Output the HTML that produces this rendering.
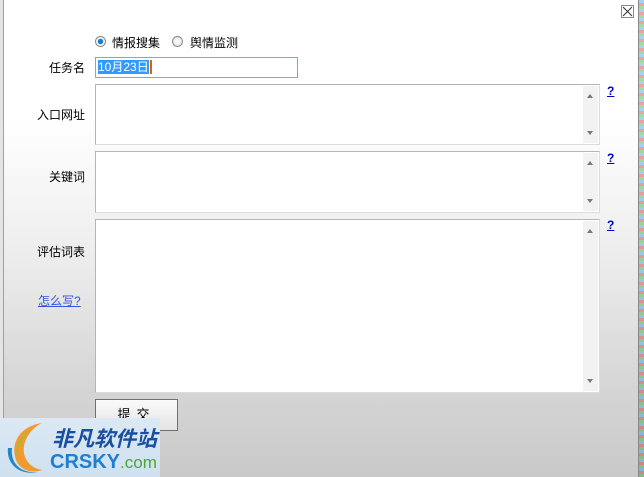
<!DOCTYPE html>
<html><head><meta charset="utf-8"><style>
*{margin:0;padding:0;box-sizing:border-box}
body{width:644px;height:477px;overflow:hidden;position:relative;font-family:"Liberation Sans","Noto Sans CJK SC","WenQuanYi Zen Hei",sans-serif;font-size:12px;color:#000;background:linear-gradient(#fff 0,#fff 25%,#ececec 55%,#d6d6d6 80%,#c9c9c9 100%)}
.a{position:absolute}
.lbl{position:absolute;right:559px;text-align:right;white-space:nowrap;font-size:12px}
.ta{position:absolute;left:95px;width:505px;background:#fff;border:1px solid #b5b5b5;border-bottom-color:#dcdcdc;border-right-color:#dcdcdc}
.sb{position:absolute;right:1px;top:1px;bottom:1px;width:15px;background:#f2f2f2}
.sb:before{content:"";position:absolute;left:4px;top:8px;border:3px solid transparent;border-bottom:4px solid #777;border-top:0}
.sb:after{content:"";position:absolute;left:4px;bottom:8px;border:3px solid transparent;border-top:4px solid #777;border-bottom:0}
.q{position:absolute;left:607px;color:#00c;font-weight:bold;text-decoration:underline;font-size:12px}
.r{position:absolute;width:11px;height:11px;border-radius:50%;border:1px solid #8a8a8a;background:radial-gradient(#fff,#ddd)}
</style></head><body>
<div class="a" style="left:0;top:0;width:3px;height:477px;background:#e4e4e4"></div>
<div class="a" style="left:3px;top:0;width:1px;height:477px;background:#a0a0a0"></div>
<div class="a" style="left:638px;top:0;width:1px;height:477px;background:#888"></div>
<div class="a" style="left:639px;top:0;width:5px;height:477px;background:repeating-linear-gradient(#3a9ad9 0 3px,#c33 3px 6px,#3a3 6px 9px);opacity:.45"></div>
<div class="a" style="left:621px;top:5px;width:13px;height:13px;border:1px solid #888;background:#fff"><svg width="11" height="11" style="position:absolute;left:0;top:0"><path d="M1 1L10 10M10 1L1 10" stroke="#333" stroke-width="1"/></svg></div>

<div class="r" style="left:95px;top:36px;background:radial-gradient(#1a7fc9 0 2.5px,#fff 3px,#ddd)"></div>
<div class="a" style="left:112px;top:34px;font-size:12px">情报搜集</div>
<div class="r" style="left:172px;top:36px"></div>
<div class="a" style="left:190px;top:34px;font-size:12px">舆情监测</div>

<div class="lbl" style="top:59px">任务名</div>
<div class="a" style="left:95px;top:57px;width:203px;height:21px;border:1px solid #7aa7d6;background:#fff"><span style="position:absolute;left:2px;top:2px;background:#3399ff;color:#fff;line-height:14px">10月23日</span><span style="position:absolute;left:54px;top:2px;width:2px;height:14px;background:#e06000"></span></div>

<div class="lbl" style="top:106px">入口网址</div>
<div class="ta" style="top:84px;height:61px"><div class="sb"></div></div>
<div class="q" style="top:84px">?</div>

<div class="lbl" style="top:168px">关键词</div>
<div class="ta" style="top:151px;height:62px"><div class="sb"></div></div>
<div class="q" style="top:151px">?</div>

<div class="lbl" style="top:243px">评估词表</div>
<div class="a" style="left:38px;top:292px;color:#3355dd;text-decoration:underline">怎么写?</div>
<div class="ta" style="top:219px;height:174px"><div class="sb"></div></div>
<div class="q" style="top:218px">?</div>

<div class="a" style="left:95px;top:399px;width:83px;height:32px;border:1px solid #707070;background:linear-gradient(#fafafa,#e4e4e4);text-align:center;line-height:30px;font-size:13px;letter-spacing:6px">提交</div>

<div class="a" style="left:0;top:418px;width:160px;height:59px;background:linear-gradient(#dce9f5,#cfe0ef)">
<svg width="50" height="59" style="position:absolute;left:2px;top:0"><path d="M40 5C18 8 8 25 14 42C18 52 30 56 40 52C28 50 20 40 22 28C24 17 32 9 40 5Z" fill="#f29a2e"/><path d="M30 12C14 20 10 38 20 48C12 40 14 24 30 12Z" fill="#8cc63f"/><path d="M6 30C4 46 18 58 36 54C20 56 8 46 10 30Z" fill="#1e88c8"/></svg>
<div class="a" style="left:52px;top:5px;font-size:21px;font-weight:bold;font-style:italic;color:#1a4fa0">非凡软件站</div>
<div class="a" style="left:50px;top:33px;font-size:20px;font-weight:bold;color:#1e7fd0">CRSKY<span style="color:#4aa83a;font-weight:normal;font-size:17px">.com</span></div>
</div>
</body></html>
